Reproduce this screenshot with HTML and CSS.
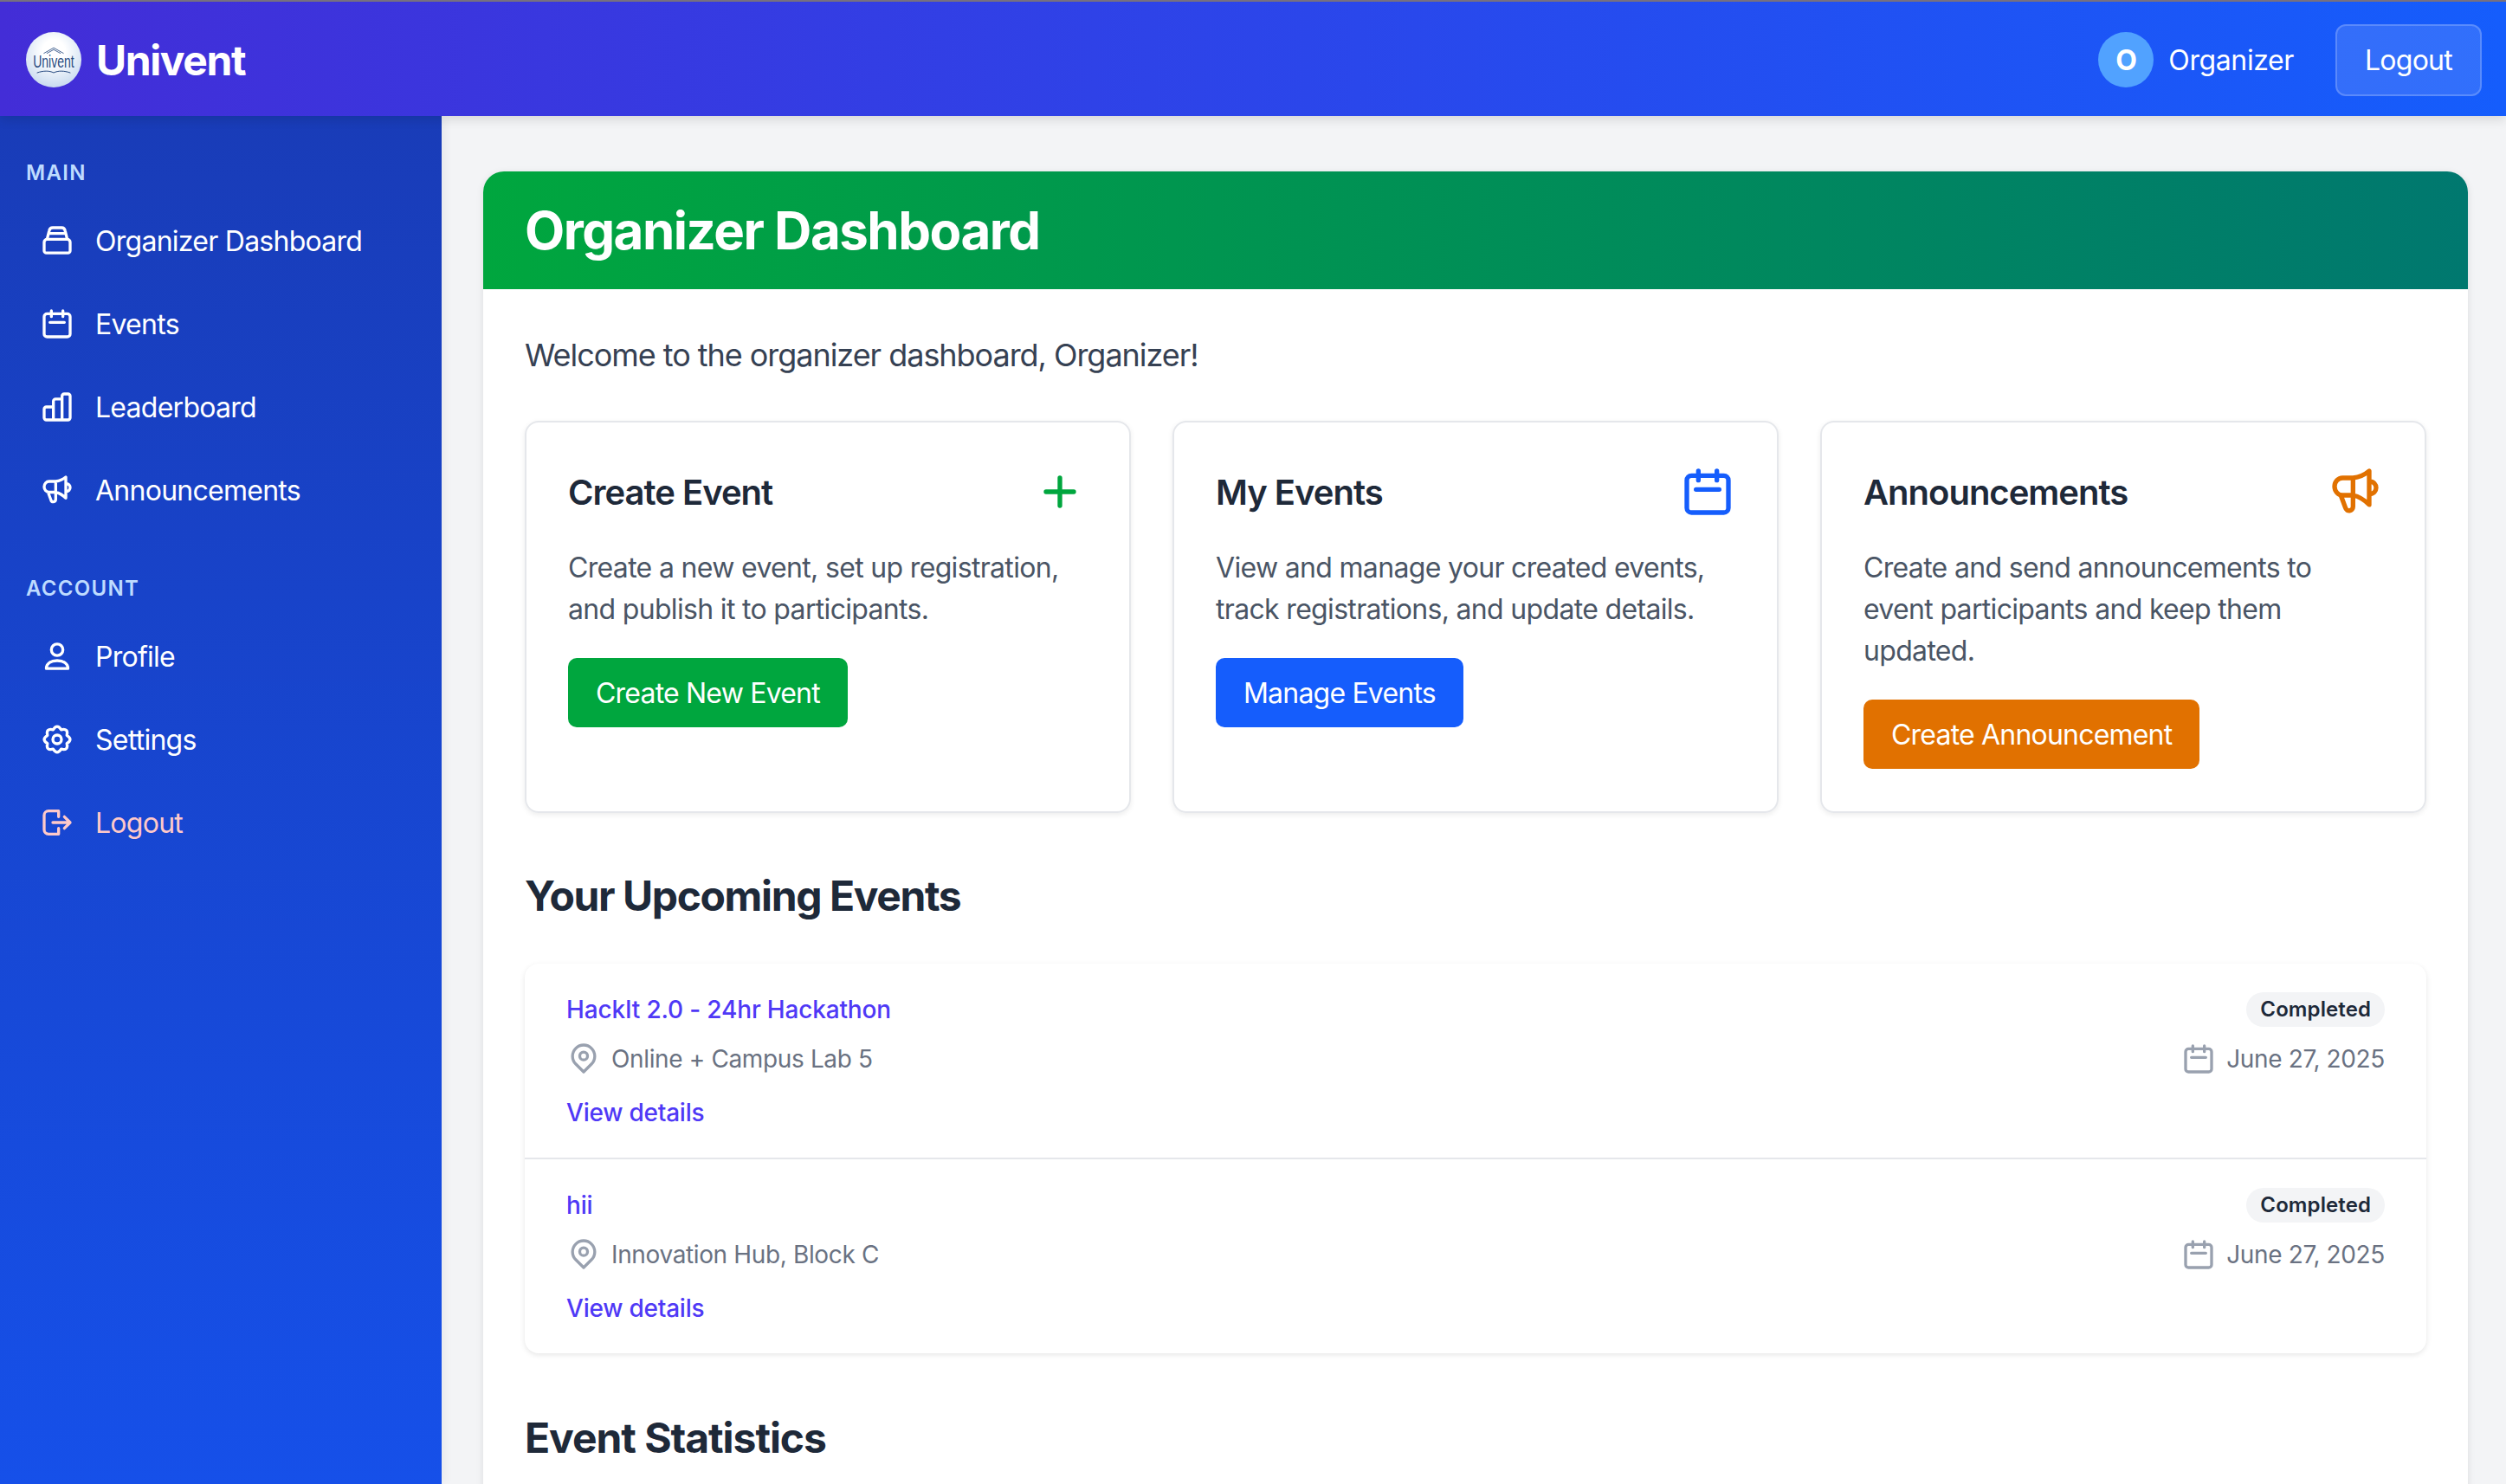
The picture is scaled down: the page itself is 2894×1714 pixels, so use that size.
FILE: index.html
```html
<!DOCTYPE html>
<html lang="en">
<head>
    <meta charset="UTF-8">
    <meta name="viewport" content="width=device-width, initial-scale=1.0">
    <title>Univent - Organizer Dashboard</title>
    <link rel="stylesheet" href="styles.css">
</head>
<body>
    <svg class="iconDefs" width="0" height="0">
        <defs>
            <symbol id="iDash" viewBox="0 0 24 24"><path d="M5 11l1.500-6a2.500 2.500 0 0 1 2.500-2h6a2.500 2.500 0 0 1 2.500 2l1.500 6M6.500 7h11M5 11h14a2 2 0 0 1 2 2v6a1.500 1.500 0 0 1-1.500 1.500h-15A1.500 1.500 0 0 1 3 19v-6a2 2 0 0 1 2-2z"/></symbol>
            <symbol id="iCal" viewBox="0 0 24 24"><path d="M5 5h14a2 2 0 0 1 2 2v12a2 2 0 0 1-2 2H5a2 2 0 0 1-2-2V7a2 2 0 0 1 2-2zM8 3v4M16 3v4M7 11h10"/></symbol>
            <symbol id="iBars" viewBox="0 0 24 24"><path d="M3 13.500a1.500 1.500 0 0 1 1.500-1.500h4.900V21H4.500A1.500 1.500 0 0 1 3 19.500zM9.400 8a1.500 1.500 0 0 1 1.500-1.500h4.500V21h-6zM15.400 4.500A1.500 1.500 0 0 1 16.900 3h2.600A1.500 1.500 0 0 1 21 4.500v15a1.500 1.500 0 0 1-1.500 1.500h-4.100z"/></symbol>
            <symbol id="iHorn" viewBox="0 0 24 24"><path d="M18 3v14.600c-2-2-4.500-3.600-7-4.100H6.500C4.500 13.500 3 11.700 3 9.700S4.500 6 6.500 6H11c2.500-.3 5-1.300 7-3zM11 6v12.500c0 2-2.800 2.300-3.300.4L5.700 13.500M18 7.500c4 0 4 5.500 0 5.500"/></symbol>
            <symbol id="iUser" viewBox="0 0 24 24"><circle cx="12" cy="7.500" r="4"/><path d="M4.500 20.500c0-3.600 3.300-5.500 7.500-5.500s7.500 1.900 7.500 5.500z"/></symbol>
            <symbol id="iGear" viewBox="0 0 24 24"><circle cx="12" cy="12" r="3"/><path d="M18.740 9.210Q23.200 12 18.740 14.790Q19.920 19.920 14.790 18.740Q12 23.200 9.210 18.740Q4.080 19.920 5.260 14.790Q.8 12 5.260 9.210Q4.080 4.080 9.210 5.260Q12 .8 14.790 5.260Q19.920 4.080 18.740 9.210z"/></symbol>
            <symbol id="iOut" viewBox="0 0 24 24"><path d="M13 4H6a3 3 0 0 0-3 3v10a3 3 0 0 0 3 3h7v-4M13 8V4M9 12h12M17 8l4 4-4 4"/></symbol>
            <symbol id="iPin" viewBox="0 0 24 24"><path d="M12 21l-5.400-5.400a7.700 7.700 0 1 1 10.800 0z"/><circle cx="12" cy="10" r="2.700"/></symbol>
            <symbol id="iPlus" viewBox="0 0 24 24"><path d="M12 6v12M6 12h12"/></symbol>
        </defs>
    </svg>

    <header class="topbar">
        <div class="brand">
            <div class="logo">
                <svg class="logoRoof" viewBox="0 0 40 12"><path d="M4 11L20 2l16 9M9 11L20 5l11 6"/></svg>
                <span class="logoText">Univent</span>
                <svg class="logoBook" viewBox="0 0 40 5"><path d="M1 4c7-2.500 14-2.500 19 0 5-2.500 12-2.500 19 0"/></svg>
            </div>
            <span class="brandName">Univent</span>
        </div>
        <div class="userArea">
            <div class="avatar">O</div>
            <span class="userName">Organizer</span>
            <button class="logoutBtn">Logout</button>
        </div>
    </header>

    <div class="layout">
        <aside class="sidebar">
            <div class="navLabel">MAIN</div>
            <a class="navItem"><svg class="navIcon"><use href="#iDash"/></svg>Organizer Dashboard</a>
            <a class="navItem"><svg class="navIcon"><use href="#iCal"/></svg>Events</a>
            <a class="navItem"><svg class="navIcon"><use href="#iBars"/></svg>Leaderboard</a>
            <a class="navItem"><svg class="navIcon"><use href="#iHorn"/></svg>Announcements</a>
            <div class="navLabel navLabelAccount">ACCOUNT</div>
            <a class="navItem"><svg class="navIcon"><use href="#iUser"/></svg>Profile</a>
            <a class="navItem"><svg class="navIcon"><use href="#iGear"/></svg>Settings</a>
            <a class="navItem navLogout"><svg class="navIcon"><use href="#iOut"/></svg>Logout</a>
        </aside>

        <main class="main">
            <div class="panel">
                <div class="hero"><h1>Organizer Dashboard</h1></div>
                <div class="panelBody">
                    <p class="welcome">Welcome to the organizer dashboard, Organizer!</p>

                    <div class="cards">
                        <div class="card">
                            <div class="cardHead">
                                <h3>Create Event</h3>
                                <svg class="cardIcon green"><use href="#iPlus"/></svg>
                            </div>
                            <p>Create a new event, set up registration, and publish it to participants.</p>
                            <a class="btn btnGreen">Create New Event</a>
                        </div>
                        <div class="card">
                            <div class="cardHead">
                                <h3>My Events</h3>
                                <svg class="cardIcon blue"><use href="#iCal"/></svg>
                            </div>
                            <p>View and manage your created events, track registrations, and update details.</p>
                            <a class="btn btnBlue">Manage Events</a>
                        </div>
                        <div class="card">
                            <div class="cardHead">
                                <h3>Announcements</h3>
                                <svg class="cardIcon orange"><use href="#iHorn"/></svg>
                            </div>
                            <p>Create and send announcements to event participants and keep them updated.</p>
                            <a class="btn btnOrange">Create Announcement</a>
                        </div>
                    </div>

                    <h2>Your Upcoming Events</h2>
                    <div class="eventList">
                        <div class="eventRow">
                            <div class="eventLeft">
                                <a class="eventTitle">HackIt 2.0 - 24hr Hackathon</a>
                                <div class="eventMeta"><svg class="metaIcon"><use href="#iPin"/></svg>Online + Campus Lab 5</div>
                                <a class="eventLink">View details</a>
                            </div>
                            <div class="eventRight">
                                <span class="badge">Completed</span>
                                <div class="eventMeta"><svg class="metaIcon"><use href="#iCal"/></svg>June 27, 2025</div>
                            </div>
                        </div>
                        <div class="eventRow">
                            <div class="eventLeft">
                                <a class="eventTitle">hii</a>
                                <div class="eventMeta"><svg class="metaIcon"><use href="#iPin"/></svg>Innovation Hub, Block C</div>
                                <a class="eventLink">View details</a>
                            </div>
                            <div class="eventRight">
                                <span class="badge">Completed</span>
                                <div class="eventMeta"><svg class="metaIcon"><use href="#iCal"/></svg>June 27, 2025</div>
                            </div>
                        </div>
                    </div>

                    <h2 class="statsTitle">Event Statistics</h2>
                </div>
            </div>
        </main>
    </div>
</body>
</html>
```

FILE: styles.css
```css
* {
    box-sizing: border-box;
}
html, body {
    height: 100%;
}
body {
    margin: 0;
    overflow: hidden;
    background-color: #f3f4f6;
    color: #1e2939;
    font-family: Inter, "Liberation Sans", sans-serif;
    font-size: 32px;
    letter-spacing: -0.023em;
}
.iconDefs {
    position: absolute;
}
svg {
    fill: none;
    stroke: currentColor;
    stroke-linecap: round;
    stroke-linejoin: round;
}

/* top bar */
.topbar {
    position: relative;
    z-index: 2;
    display: flex;
    align-items: center;
    justify-content: space-between;
    height: 134px;
    padding: 2px 28px 0 30px;
    border-top: 2px solid #77707f;
    background: linear-gradient(90deg, #432dd7, #155dfc);
    box-shadow: 0 4px 12px rgba(0, 0, 0, 0.12);
    color: #fff;
}
.brand, .userArea {
    display: flex;
    align-items: center;
}
.logo {
    display: flex;
    flex-direction: column;
    align-items: center;
    justify-content: center;
    width: 64px;
    height: 64px;
    border-radius: 50%;
    background: radial-gradient(circle at 50% 35%, #fff 25%, #b4cdea 100%);
    color: #274a80;
}
.logoRoof {
    width: 28px;
    height: 10px;
    stroke-width: 1.2;
}
.logoBook {
    width: 42px;
    height: 5px;
    stroke-width: 1;
}
.logoText {
    font-family: "Liberation Sans", sans-serif;
    font-size: 20px;
    line-height: 17px;
    letter-spacing: 0;
    transform: scaleX(0.7);
}
.brandName {
    margin-left: 17px;
    font-size: 48px;
    font-weight: 700;
    letter-spacing: -1.4px;
}
.avatar {
    display: flex;
    align-items: center;
    justify-content: center;
    width: 64px;
    height: 64px;
    border-radius: 50%;
    background-color: #51a2ff;
    font-weight: 700;
}
.userName {
    margin-left: 17px;
    margin-right: 48px;
    letter-spacing: -0.012em;
}
.logoutBtn {
    width: 169px;
    height: 83px;
    border: 2px solid rgba(255, 255, 255, 0.2);
    border-radius: 12px;
    background-color: rgba(255, 255, 255, 0.12);
    color: #fff;
    font-family: inherit;
    font-size: 32px;
    letter-spacing: inherit;
}

/* page layout */
.layout {
    display: flex;
    height: calc(100% - 134px);
}
.sidebar {
    flex: 0 0 510px;
    padding-top: 50px;
    background: linear-gradient(180deg, #193cb8, #1650e9);
    box-shadow: 2px 0 12px rgba(0, 0, 0, 0.06);
    color: #fff;
}
.navLabel {
    height: 32px;
    margin-bottom: 14px;
    padding-left: 30px;
    color: #bedbff;
    font-size: 24px;
    font-weight: 600;
    line-height: 32px;
    letter-spacing: 1.3px;
}
.navLabelAccount {
    margin-top: 50px;
}
.navItem {
    display: flex;
    align-items: center;
    height: 96px;
    padding-left: 46px;
}
.navIcon {
    width: 40px;
    height: 40px;
    margin-right: 24px;
    stroke-width: 2;
}
.navLogout {
    color: #ffc9c9;
}

/* main area */
.main {
    flex: 1;
    padding: 64px 44px 0 48px;
}
.panel {
    border-radius: 24px;
    background-color: #fff;
    box-shadow: 0 2px 8px rgba(0, 0, 0, 0.1);
}
.hero {
    display: flex;
    align-items: center;
    height: 136px;
    padding-left: 48px;
    border-radius: 24px 24px 0 0;
    background: linear-gradient(90deg, #00a63e, #00786f);
    color: #fff;
}
.hero h1 {
    margin: 0;
    font-size: 60px;
    font-weight: 700;
    letter-spacing: -0.025em;
}
.panelBody {
    padding: 48px;
}
.welcome {
    margin: 0 0 48px;
    color: #364153;
    font-size: 36px;
    line-height: 56px;
    letter-spacing: -0.029em;
}

/* action cards */
.cards {
    display: grid;
    grid-template-columns: repeat(3, 1fr);
    gap: 48px;
}
.card {
    height: 453px;
    padding: 48px;
    border: 2px solid #e5e7eb;
    border-radius: 16px;
    box-shadow: 0 2px 6px rgba(0, 0, 0, 0.08);
}
.cardHead {
    display: flex;
    align-items: center;
    justify-content: space-between;
    height: 64px;
    margin-bottom: 32px;
}
.cardHead h3 {
    margin: 0;
    font-size: 40px;
    font-weight: 600;
    letter-spacing: -0.025em;
}
.cardIcon {
    width: 64px;
    height: 64px;
    stroke-width: 2;
}
.green {
    color: #00a63e;
}
.blue {
    color: #155dfc;
}
.orange {
    color: #e17100;
}
.card p {
    margin: 0 0 32px;
    color: #4a5565;
    line-height: 48px;
    letter-spacing: -0.021em;
}
.btn {
    display: inline-block;
    height: 80px;
    padding: 0 32px;
    border-radius: 10px;
    color: #fff;
    line-height: 82px;
    letter-spacing: -0.025em;
}
.btnGreen {
    background-color: #00a63e;
}
.btnBlue {
    background-color: #155dfc;
}
.btnOrange {
    background-color: #e17100;
}

/* upcoming events */
h2 {
    margin: 64px 0 46px;
    font-size: 48px;
    font-weight: 700;
    line-height: 64px;
    letter-spacing: -0.029em;
}
.eventList {
    border-radius: 16px;
    box-shadow: 0 2px 6px rgba(0, 0, 0, 0.1);
}
.eventRow {
    display: flex;
    justify-content: space-between;
    height: 224px;
    padding: 31px 48px;
}
.eventRow + .eventRow {
    height: 226px;
    border-top: 2px solid #e5e7eb;
}
.eventLeft {
    display: flex;
    flex-direction: column;
    align-items: flex-start;
}
.eventRight {
    display: flex;
    flex-direction: column;
    align-items: flex-end;
    padding-top: 2px;
}
.eventTitle {
    height: 44px;
    color: #4f39f6;
    font-size: 28px;
    font-weight: 500;
    line-height: 44px;
    letter-spacing: -0.006em;
}
.eventMeta {
    display: flex;
    align-items: center;
    height: 40px;
    margin-top: 15px;
    color: #6a7282;
    font-size: 28px;
    line-height: 40px;
    letter-spacing: -0.013em;
}
.metaIcon {
    width: 40px;
    height: 40px;
    margin-right: 12px;
    color: #99a1af;
    stroke-width: 2;
}
.eventRight .eventMeta {
    margin-top: 17px;
}
.eventLink {
    margin-top: 22px;
    color: #4f39f6;
    font-size: 28px;
    font-weight: 500;
    line-height: 40px;
    letter-spacing: -0.008em;
}
.badge {
    height: 40px;
    padding: 0 16px;
    border-radius: 20px;
    background-color: #f3f4f6;
    color: #1e2939;
    font-size: 24px;
    font-weight: 600;
    line-height: 40px;
    letter-spacing: 0.004em;
}
.statsTitle {
    margin-top: 66px;
    letter-spacing: -0.022em;
}
```
